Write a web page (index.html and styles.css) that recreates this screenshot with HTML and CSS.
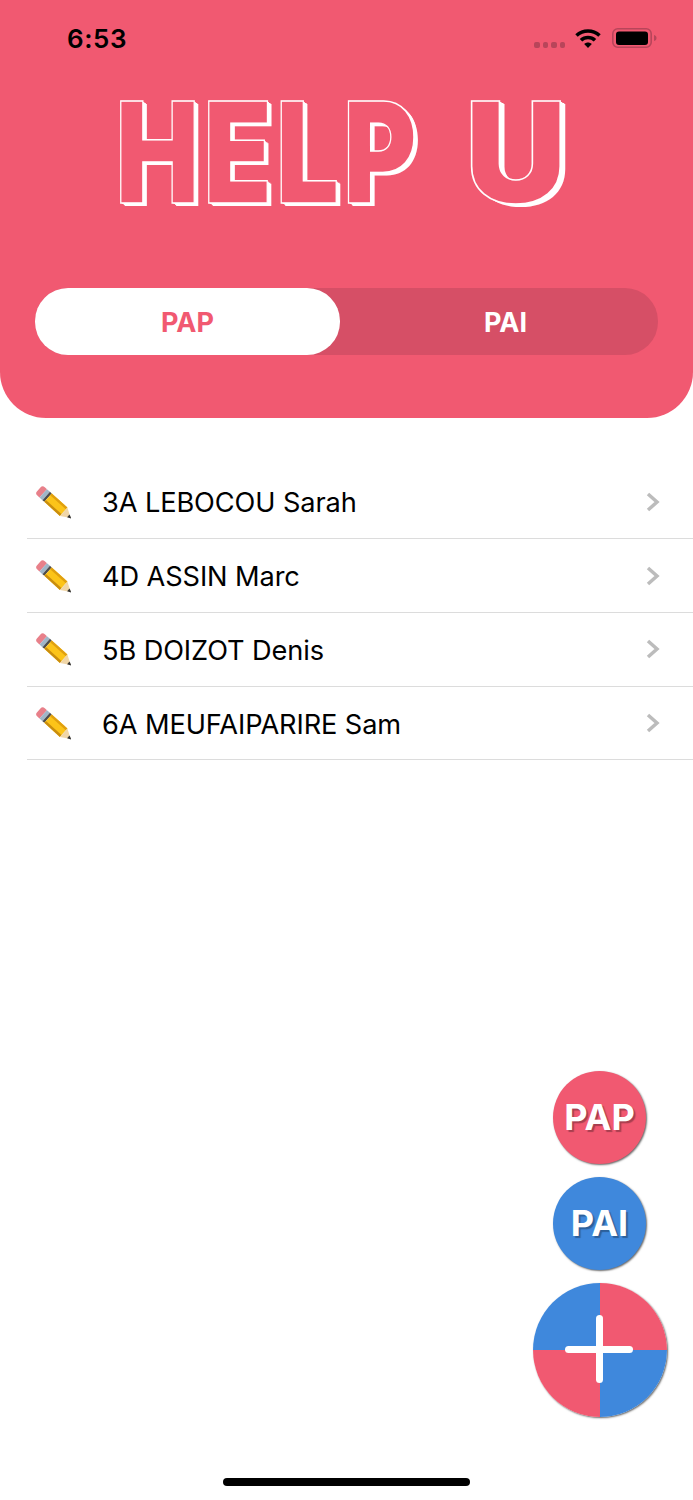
FILE: index.html
```html
<!DOCTYPE html>
<html lang="fr">
<head>
  <meta charset="UTF-8" />
  <meta name="viewport" content="width=device-width, initial-scale=1.0" />
  <title>Help U</title>
  <link rel="stylesheet" href="styles.css">
</head>

<body>
  <div class="page">
    <header class="header">
      <div class="status-bar">
        <span class="time">6:53</span>
        <div class="status-icons">
          <div class="signal"><span></span><span></span><span></span><span></span></div>
          <svg class="wifi" viewBox="0 0 26 20" width="26" height="20">
            <path d="M1.500 7.500C8 1.500 18 1.500 24.500 7.500" fill="none" stroke="#000" stroke-width="3.600" />
            <path d="M6 12.300C10 8.600 16 8.600 20 12.300" fill="none" stroke="#000" stroke-width="3.600" />
            <path d="M9.200 16 13 20l3.800-4C14.500 14 11.500 14 9.200 16z" fill="#000" />
          </svg>
          <svg class="battery" viewBox="0 0 45 20" width="45" height="20">
            <rect x="0.800" y="0.800" width="38.400" height="18.400" rx="5" fill="none" stroke="#b8455a" stroke-width="1.600" />
            <rect x="4" y="3.500" width="32" height="13.500" rx="3" fill="#000" />
            <path d="M42 7c1.800 .5 2.500 1.500 2.500 3s-.7 2.500-2.500 3z" fill="#b8455a" />
          </svg>
        </div>
      </div>

      <h1 class="logo">HELP <span class="logo-u">U</span></h1>

      <div class="segment">
        <button class="segment-btn active" type="button">PAP</button>
        <button class="segment-btn" type="button">PAI</button>
      </div>
    </header>

    <ul class="list">
      <li class="row">
        <svg class="pencil" viewBox="0 0 36 34" width="36" height="34"><use href="#pencil-icon" /></svg>
        <span class="row-name">3A LEBOCOU Sarah</span>
        <svg class="chevron" viewBox="0 0 14 20" width="14" height="20"><path d="M2 2l9 8-9 8" /></svg>
      </li>
      <li class="row">
        <svg class="pencil" viewBox="0 0 36 34" width="36" height="34"><use href="#pencil-icon" /></svg>
        <span class="row-name">4D ASSIN Marc</span>
        <svg class="chevron" viewBox="0 0 14 20" width="14" height="20"><path d="M2 2l9 8-9 8" /></svg>
      </li>
      <li class="row">
        <svg class="pencil" viewBox="0 0 36 34" width="36" height="34"><use href="#pencil-icon" /></svg>
        <span class="row-name">5B DOIZOT Denis</span>
        <svg class="chevron" viewBox="0 0 14 20" width="14" height="20"><path d="M2 2l9 8-9 8" /></svg>
      </li>
      <li class="row">
        <svg class="pencil" viewBox="0 0 36 34" width="36" height="34"><use href="#pencil-icon" /></svg>
        <span class="row-name">6A MEUFAIPARIRE Sam</span>
        <svg class="chevron" viewBox="0 0 14 20" width="14" height="20"><path d="M2 2l9 8-9 8" /></svg>
      </li>
    </ul>

    <div class="fab-group">
      <button class="fab fab-pap" type="button">PAP</button>
      <button class="fab fab-pai" type="button">PAI</button>
      <button class="fab-main" type="button" aria-label="Ajouter"></button>
    </div>

    <div class="home-indicator"></div>
  </div>

  <svg class="defs" width="0" height="0">
    <defs>
      <g id="pencil-icon">
        <g transform="translate(4.500 5) rotate(42) scale(1 0.8)">
          <path d="M5 -7H2.500A3.500 3.500 0 0 0 -1 -3.500V3.500A3.500 3.500 0 0 0 2.500 7H5z" fill="#e8808a" />
          <rect x="5" y="-7" width="4" height="14" fill="#9fb6c8" />
          <rect x="9" y="-7" width="2.500" height="14" fill="#4d4d4d" />
          <rect x="11.500" y="-7" width="21" height="14" fill="#fcc419" />
          <rect x="11.500" y="-7" width="21" height="3" fill="#e0a010" />
          <rect x="11.500" y="4" width="21" height="3" fill="#c98d0e" />
          <path d="M32.500 -7 42 0 32.500 7z" fill="#f0d6a8" />
          <path d="M38.800 -2.300 43 0 38.800 2.300z" fill="#333" />
        </g>
      </g>
    </defs>
  </svg>
</body>
</html>
```

FILE: styles.css
```css
* {
  margin: 0;
  padding: 0;
  box-sizing: border-box;
}

body {
  font-family: 'Inter', sans-serif;
  color: #000;
  background-color: #fff;
}

button {
  font-family: 'Inter', sans-serif;
  border: none;
  cursor: pointer;
}

.defs {
  display: block;
}

.page {
  position: relative;
  width: 693px;
  height: 1500px;
  overflow: hidden;
}

.header {
  height: 418px;
  background-color: #f15971;
  border-radius: 0 0 46px 46px;
  padding: 0 35px;
  display: flex;
  flex-direction: column;
}

.status-bar {
  height: 76px;
  display: flex;
  justify-content: space-between;
  align-items: center;
  padding: 0 1px 0 32px;
}

.time {
  font-size: 26px;
  font-weight: 600;
  letter-spacing: 0.6px;
}

.status-icons {
  display: flex;
  align-items: center;
}

.signal {
  display: flex;
  gap: 3px;
  margin: 14px 10px 0 0;
}

.signal span {
  width: 5.500px;
  height: 5.500px;
  border-radius: 2px;
  background-color: #b8455a;
}

.wifi {
  margin-right: 11px;
}

.logo {
  height: 136px;
  margin-top: 8px;
  margin-bottom: 3px;
  text-align: center;
  font-family: 'Inter', sans-serif;
  font-size: 140px;
  font-weight: 900;
  line-height: 136px;
  letter-spacing: 5px;
  word-spacing: 22px;
  white-space: nowrap;
  color: #f15971;
  -webkit-text-stroke: 1.500px #fff;
  text-shadow: 2px 1px 0 #fff, 4px 2px 0 #fff, 5px 3px 0 #fff;
  transform: translateX(-14px) scaleX(0.8);
}

.logo-u {
  display: inline-block;
  transform: scaleX(1.26);
  transform-origin: left center;
}

.segment {
  display: flex;
  justify-content: space-between;
  height: 67px;
  margin-top: 65px;
  border-radius: 33px;
  background-color: #d64f66;
}

.segment-btn {
  width: 305px;
  height: 67px;
  padding-top: 2px;
  border-radius: 33px;
  background: transparent;
  color: #fff;
  font-size: 27px;
  font-weight: 700;
}

.segment-btn.active {
  background-color: #fff;
  color: #f15971;
}

.list {
  list-style: none;
  margin: 47.600px 0 0 27px;
}

.row {
  height: 73.700px;
  display: flex;
  align-items: center;
  padding: 0 33px 0 8px;
  border-bottom: 1px solid #dcdcdc;
}

.pencil {
  flex-shrink: 0;
}

.row-name {
  flex: 1;
  margin: 2px 0 0 31px;
  font-size: 27.200px;
  letter-spacing: -0.1px;
}

.chevron {
  fill: none;
  stroke: #bcbcbc;
  stroke-width: 3.500;
}

.fab-group {
  position: absolute;
  top: 1071px;
  left: 533px;
  width: 134px;
  display: flex;
  flex-direction: column;
  gap: 13px;
}

.fab {
  width: 93px;
  height: 93px;
  margin-left: 20px;
  padding-bottom: 2px;
  border-radius: 50%;
  color: #fff;
  font-size: 36px;
  font-weight: 700;
  text-shadow: 2px 2px 1px rgba(0, 0, 0, 0.3);
  box-shadow: 1px 1px 2px rgba(0, 0, 0, 0.6);
}

.fab-pap {
  background-color: #f15971;
}

.fab-pai {
  background-color: #3f88dc;
}

.fab-main {
  position: relative;
  width: 134px;
  height: 134px;
  border-radius: 50%;
  background: conic-gradient(#f15971 0 25%, #3f88dc 25% 50%, #f15971 50% 75%, #3f88dc 75% 100%);
  box-shadow: 1px 1px 2px rgba(0, 0, 0, 0.6);
}

.fab-main::before,
.fab-main::after {
  content: '';
  position: absolute;
  background-color: #fff;
  border-radius: 4px;
}

.fab-main::before {
  left: 32px;
  top: 63px;
  width: 68px;
  height: 7px;
}

.fab-main::after {
  left: 63px;
  top: 32px;
  width: 7px;
  height: 68px;
}

.home-indicator {
  position: absolute;
  left: 223px;
  bottom: 14px;
  width: 247px;
  height: 8px;
  border-radius: 4px;
  background-color: #000;
}
```
